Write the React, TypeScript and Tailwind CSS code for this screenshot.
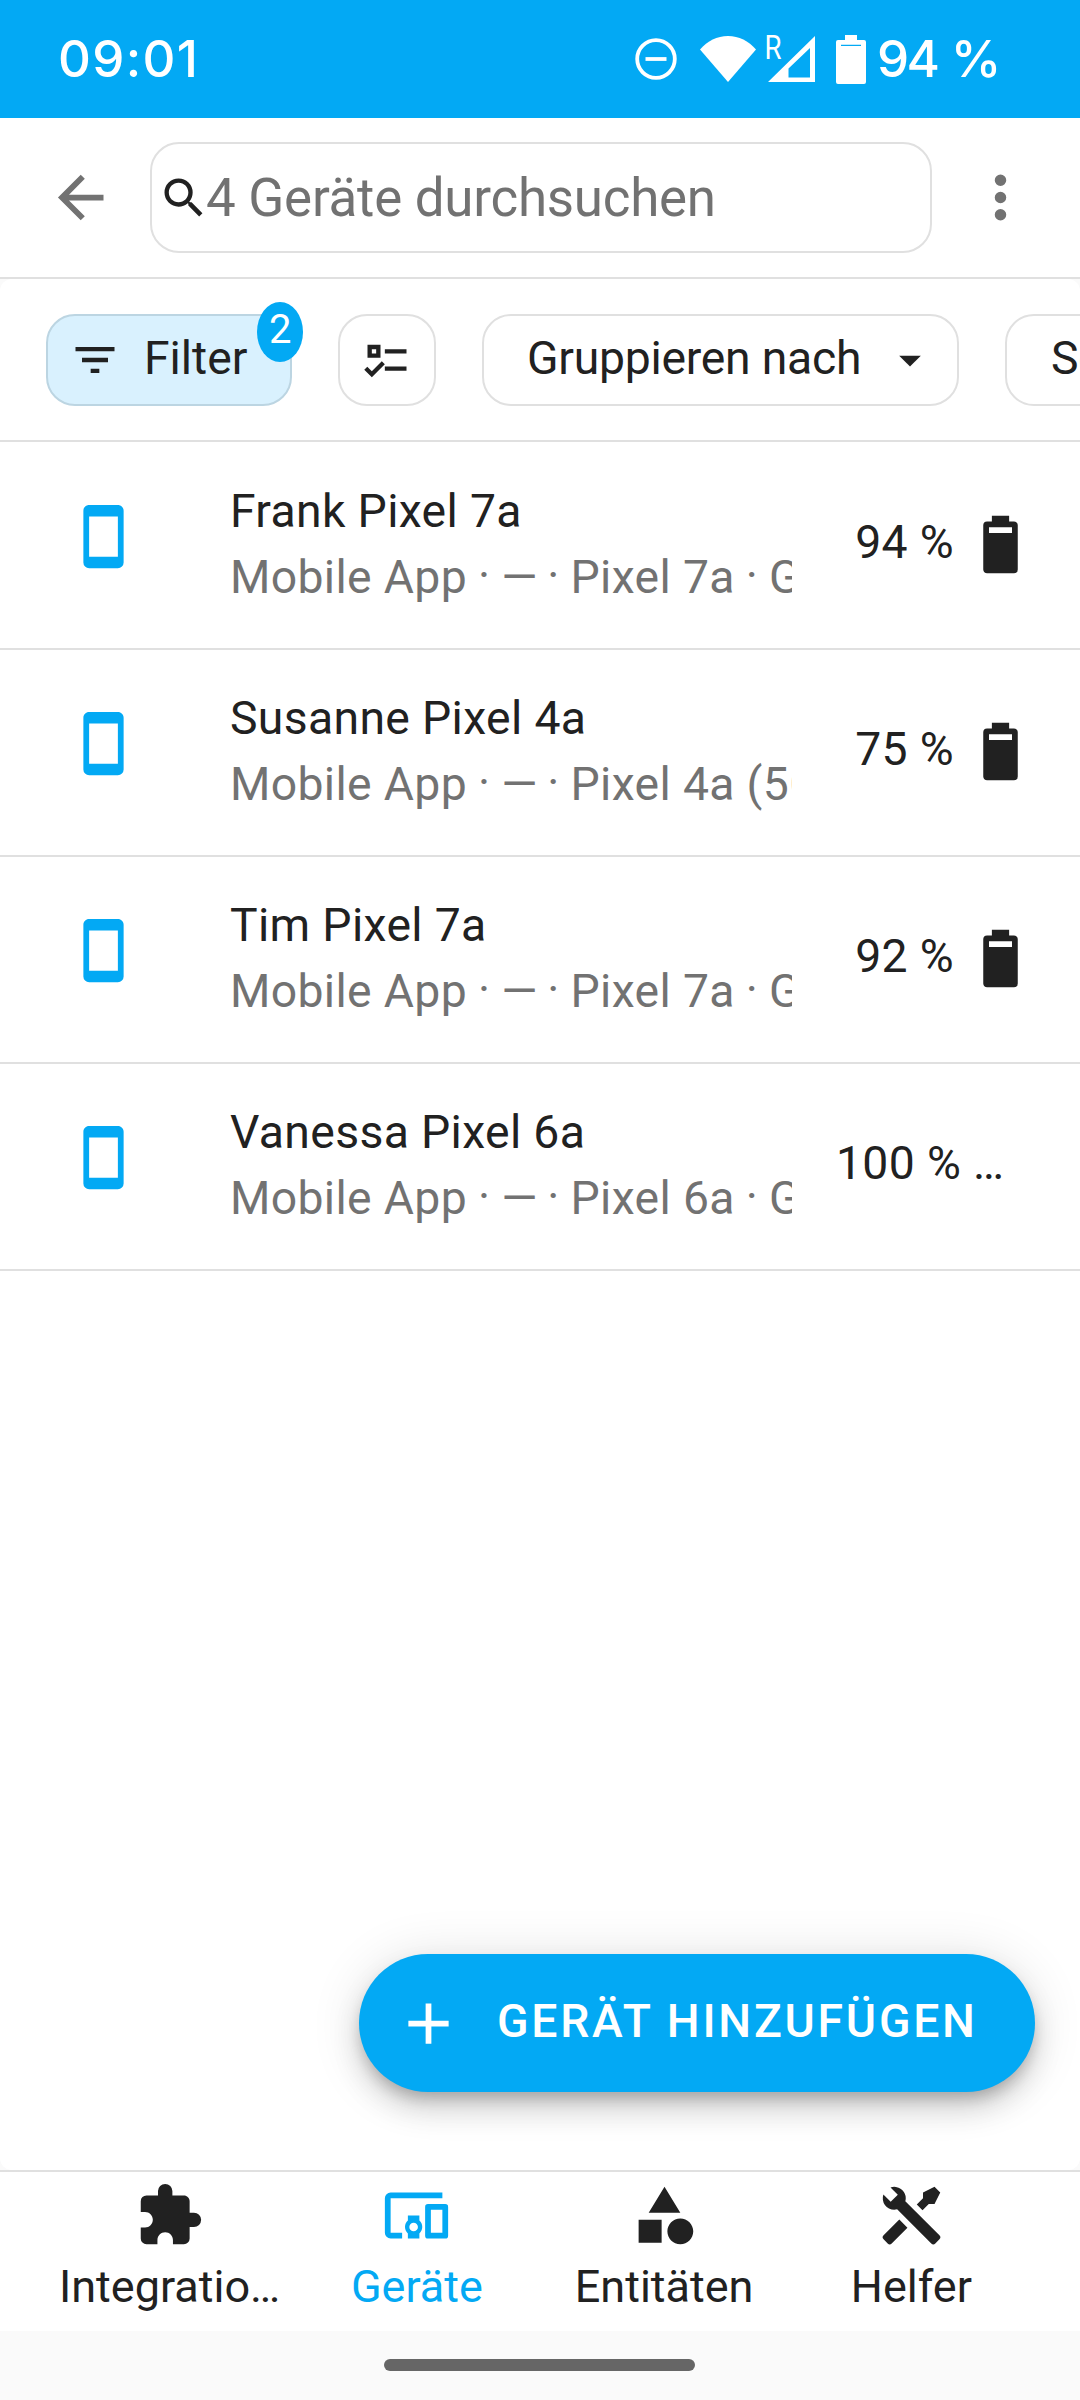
import React from "react";

const icons = {
  back: "M20,11V13H8L13.5,18.5L12.08,19.92L4.16,12L12.08,4.08L13.5,5.5L8,11H20Z",
  dots: "M12,16A2,2 0 0,1 14,18A2,2 0 0,1 12,20A2,2 0 0,1 10,18A2,2 0 0,1 12,16M12,10A2,2 0 0,1 14,12A2,2 0 0,1 12,14A2,2 0 0,1 10,12A2,2 0 0,1 12,10M12,4A2,2 0 0,1 14,6A2,2 0 0,1 12,8A2,2 0 0,1 10,6A2,2 0 0,1 12,4Z",
  search:
    "M9.5,3A6.5,6.5 0 0,1 16,9.5C16,11.11 15.41,12.59 14.44,13.73L14.71,14H15.5L20.5,19L19,20.5L14,15.5V14.71L13.73,14.44C12.59,15.41 11.11,16 9.5,16A6.5,6.5 0 0,1 3,9.5A6.5,6.5 0 0,1 9.5,3M9.5,5C7,5 5,7 5,9.5C5,12 7,14 9.5,14C12,14 14,12 14,9.5C14,7 12,5 9.5,5Z",
  filter: "M6,13H18V11H6M3,6V8H21V6M10,18H14V16H10V18Z",
  checks:
    "M3,5H9V11H3V5M5,7V9H7V7H5M11,7H21V9H11V7M11,15H21V17H11V15M5,20L1.5,16.5L2.91,15.09L5,17.17L9.59,12.59L11,14L5,20Z",
  down: "M7,10L12,15L17,10H7Z",
  phone:
    "M17,19H7V5H17M17,1H7C5.89,1 5,1.89 5,3V21A2,2 0 0,0 7,23H17A2,2 0 0,0 19,21V3C19,1.89 18.1,1 17,1Z",
  battery:
    "M16,8H8V6H16M16.67,4H15V2H9V4H7.33A1.33,1.33 0 0,0 6,5.33V20.67C6,21.4 6.6,22 7.33,22H16.67A1.33,1.33 0 0,0 18,20.67V5.33C18,4.6 17.4,4 16.67,4Z",
  plus: "M19,13H13V19H11V13H5V11H11V5H13V11H19V13Z",
  puzzle:
    "M20.5,11H19V7C19,5.89 18.1,5 17,5H13V3.5A2.5,2.5 0 0,0 10.5,1A2.5,2.5 0 0,0 8,3.5V5H4A2,2 0 0,0 2,7V10.8H3.5C5,10.8 6.2,12 6.2,13.5C6.2,15 5,16.2 3.5,16.2H2V20A2,2 0 0,0 4,22H7.8V20.5C7.8,19 9,17.8 10.5,17.8C12,17.8 13.2,19 13.2,20.5V22H17A2,2 0 0,0 19,20V16H20.5A2.5,2.5 0 0,0 23,13.5A2.5,2.5 0 0,0 20.5,11Z",
  devices:
    "M3,6H21V4H3A2,2 0 0,0 1,6V18A2,2 0 0,0 3,20H7V18H3V6M13,12H9V13.78C8.39,14.33 8,15.11 8,16C8,16.89 8.39,17.67 9,18.22V20H13V18.22C13.61,17.67 14,16.88 14,16C14,15.12 13.61,14.33 13,13.78V12M11,17.5A1.5,1.5 0 0,1 9.5,16A1.5,1.5 0 0,1 11,14.5A1.5,1.5 0 0,1 12.5,16A1.5,1.5 0 0,1 11,17.5M22,8H16A1,1 0 0,0 15,9V19A1,1 0 0,0 16,20H22A1,1 0 0,0 23,19V9A1,1 0 0,0 22,8M21,18H17V10H21V18Z",
  shape:
    "M11,13.5V21.5H3V13.5H11M12,2L17.5,11H6.5L12,2M17.5,13C20,13 22,15 22,17.5C22,20 20,22 17.5,22C15,22 13,20 13,17.5C13,15 15,13 17.5,13Z",
  tools:
    "M21.71 20.29L20.29 21.71A1 1 0 0 1 18.88 21.71L7 9.85A3.81 3.81 0 0 1 6 10A4 4 0 0 1 2.22 4.7L4.76 7.24L5.29 6.71L6.71 5.29L7.24 4.76L4.7 2.22A4 4 0 0 1 10 6A3.81 3.81 0 0 1 9.85 7L21.71 18.88A1 1 0 0 1 21.71 20.29M2.29 18.88A1 1 0 0 0 2.29 20.29L3.71 21.71A1 1 0 0 0 5.12 21.71L10.59 16.25L7.76 13.42M20 2L16 4V6L13.83 8.17L15.83 10.17L18 8H20L22 4Z",
};

const devices = [
  { name: "Frank Pixel 7a", model: "Pixel 7a", level: "94 %" },
  { name: "Susanne Pixel 4a", model: "Pixel 4a (5G)", level: "75 %" },
  { name: "Tim Pixel 7a", model: "Pixel 7a", level: "92 %" },
  { name: "Vanessa Pixel 6a", model: "Pixel 6a", level: "100 %" },
];

const tabs = [
  { label: "Integratio…", icon: icons.puzzle, active: false },
  { label: "Geräte", icon: icons.devices, active: true },
  { label: "Entitäten", icon: icons.shape, active: false },
  { label: "Helfer", icon: icons.tools, active: false },
];

function Icon({ path, className = "size-[69px]" }: { path: string; className?: string }) {
  return (
    <svg viewBox="0 0 24 24" fill="currentColor" className={`shrink-0 ${className}`}>
      <path d={path} />
    </svg>
  );
}

function Dot() {
  return (
    <>
      {" "}
      <span className="-mx-px inline-block -translate-y-[2px]">·</span>{" "}
    </>
  );
}

function StatusBar() {
  return (
    <div className="flex h-[118px] shrink-0 items-center bg-[#03a9f4] pl-[58px] font-[Inter] text-[51px] font-medium leading-[60px] whitespace-nowrap text-white">
      <span className="tracking-[1.3px]">09:01</span>
      <svg viewBox="0 0 42 42" className="ml-auto size-[42px] shrink-0" fill="none" stroke="currentColor" strokeWidth="3.8">
        <circle cx="21" cy="21" r="18.8" />
        <path d="M10.5 21H31.5" />
      </svg>
      <svg viewBox="0 0 56 46" className="ml-[23px] h-[46px] w-[56px] shrink-0" fill="currentColor">
        <path d="M0 13.5C7.5 5 17 0 28 0S48.500 5 56 13.500L28 46Z" />
      </svg>
      <svg viewBox="0 0 50 50" className="ml-[10px] h-[50px] w-[50px] shrink-0" fill="currentColor">
        <text x="-1.5" y="25" className="font-[Roboto] text-[34px] font-normal" textLength="17" lengthAdjust="spacingAndGlyphs">
          R
        </text>
        <path fillRule="evenodd" d="M49 2V48H2ZM44 14L22.500 34.500V43.500H44Z" />
      </svg>
      <svg viewBox="0 0 30 49" className="ml-[20px] h-[49px] w-[30px] shrink-0" fill="currentColor">
        <path
          fillRule="evenodd"
          d="M9 0H21V5H28A2 2 0 0 1 30 7V47A2 2 0 0 1 28 49H2A2 2 0 0 1 0 47V7A2 2 0 0 1 2 5H9ZM5 9.700V11H25V9.700Z"
        />
      </svg>
      <span className="ml-[11px] w-[203px] tracking-[-2.5px] [word-spacing:2px]">94 %</span>
    </div>
  );
}

function Header() {
  return (
    <header className="flex h-[161px] shrink-0 items-center border-b-2 border-[#e0e0e0] bg-white pr-[45px] pl-[46px] text-[#727272]">
      <Icon path={icons.back} />
      <div className="ml-[35px] flex h-[111px] w-[782px] items-center rounded-[29px] border-2 border-[#e0e0e0] pl-[6px]">
        <Icon path={icons.search} className="size-[52px] text-[#212121]" />
        <span className="-ml-1 text-[52.9px] leading-[62px] tracking-[-0.25px]">4 Geräte durchsuchen</span>
      </div>
      <Icon path={icons.dots} className="ml-auto size-[69px]" />
    </header>
  );
}

function Toolbar() {
  return (
    <div className="flex h-[163px] shrink-0 items-center gap-[46px] overflow-hidden border-b-2 border-[#e0e0e0] pl-[46px] tracking-[-0.25px] whitespace-nowrap">
      <button className="relative flex h-[92px] w-[246px] shrink-0 items-center rounded-[29px] border-2 border-[#bcd5e2] bg-[#d9f1fe] pl-[21px]">
        <Icon path={icons.filter} className="size-[52px]" />
        <span className="ml-[23px] pb-1 tracking-normal">Filter</span>
        <span className="absolute -top-[14px] left-[209px] flex h-[60px] w-[46px] items-center justify-center rounded-[50%] bg-[#03a9f4] pb-[3px] text-[40px] text-white">
          2
        </span>
      </button>
      <button className="flex h-[92px] w-[98px] shrink-0 items-center justify-center rounded-[29px] border-2 border-[#e0e0e0]">
        <Icon path={icons.checks} className="size-[52px]" />
      </button>
      <button className="flex h-[92px] w-[477px] shrink-0 items-center justify-between rounded-[29px] border-2 border-[#e0e0e0] pr-[21px] pl-[43px]">
        <span className="pb-1">Gruppieren nach</span>
        <Icon path={icons.down} className="size-[52px]" />
      </button>
      <button className="flex h-[92px] shrink-0 items-center rounded-[29px] border-2 border-[#e0e0e0] pl-[44px]">
        <span className="pb-1">Sortieren nach</span>
      </button>
    </div>
  );
}

export default function App() {
  return (
    <div className="flex h-[2400px] w-[1080px] flex-col overflow-hidden bg-[#fafafa] font-[Roboto,sans-serif] text-[46.3px] leading-[60px] text-[#212121]">
      <StatusBar />
      <Header />
      <main className="relative flex flex-1 flex-col rounded-[12px] bg-white">
        <Toolbar />
        <ul className="mt-px">
          {devices.map((device) => (
            <li key={device.name} className="flex h-[207px] border-b-2 border-[#e0e0e0] pl-[69px] tracking-[0.35px] whitespace-nowrap">
              <Icon path={icons.phone} className="mt-[59px] size-[69px] text-[#03a9f4]" />
              <div className="ml-[92px] w-[562px] overflow-hidden pt-[35px] leading-[66px]">
                <div>{device.name}</div>
                <div className="text-[#727272]">
                  Mobile App
                  <Dot />
                  <span className="tracking-[-1px]">—</span>
                  <Dot />
                  {device.model}
                  <Dot />
                  Google
                </div>
              </div>
              {device.level === "100 %" ? (
                <span className="ml-[44px] pt-[69px]">{device.level} …</span>
              ) : (
                <div className="mr-[45px] ml-auto flex">
                  <span className="pt-[69px]">{device.level}</span>
                  <Icon path={icons.battery} className="mt-[67px] ml-[12px] size-[69px]" />
                </div>
              )}
            </li>
          ))}
        </ul>
        <button className="absolute right-[45px] bottom-[78px] flex h-[138px] w-[676px] items-center rounded-full bg-[#03a9f4] pl-[35px] font-medium tracking-[2.75px] whitespace-nowrap text-white shadow-[0_9px_14px_-3px_rgba(0,0,0,0.2),0_17px_29px_0_rgba(0,0,0,0.14),0_3px_52px_0_rgba(0,0,0,0.12)]">
          <Icon path={icons.plus} />
          <span className="ml-[34px] pb-1">GERÄT HINZUFÜGEN</span>
        </button>
      </main>
      <nav className="flex h-[161px] shrink-0 border-t-2 border-[#e0e0e0] bg-white pr-[45px] pl-[46px]">
        {tabs.map((tab) => (
          <a
            key={tab.label}
            className={`flex flex-1 flex-col items-center pt-[9px] ${tab.active ? "text-[#03a9f4]" : ""}`}
          >
            <Icon path={tab.icon} />
            <span className="mt-[7px] text-[45px]">{tab.label}</span>
          </a>
        ))}
      </nav>
      <div className="flex h-[69px] shrink-0 justify-center pt-[28px] pr-px">
        <div className="h-[12px] w-[311px] rounded-full bg-[#666]" />
      </div>
    </div>
  );
}
